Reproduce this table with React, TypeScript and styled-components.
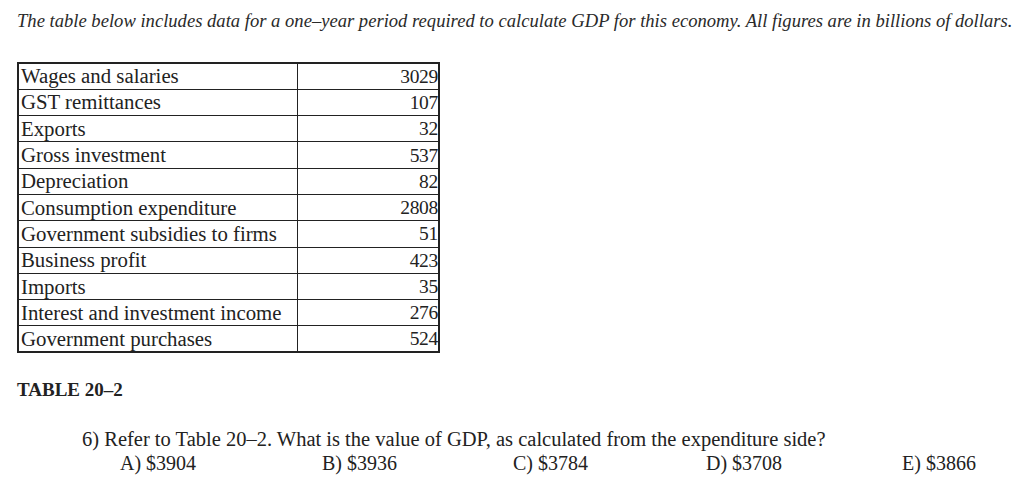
import React from "react";
import styled, { createGlobalStyle } from "styled-components";

const Global = createGlobalStyle`
  html, body { margin: 0; padding: 0; background: #fff; }
  body { font-family: "Liberation Serif", "DejaVu Serif", serif; color: #1e1e1e; }
`;

const Page = styled.div`
  width: 1024px;
  height: 484px;
  box-sizing: border-box;
  padding: 10px 0 0 17px;
  display: flex;
  flex-direction: column;
`;

const Intro = styled.p`
  margin: 0;
  font-style: italic;
  font-size: 18.6px;
  line-height: 22px;
  color: #2a2a2a;
  white-space: nowrap;
`;

const Table = styled.table`
  margin-top: 30px;
  border-collapse: collapse;
  width: 423px;
  border: 2px solid #222;
`;

const Row = styled.tr`
  height: 26.3px;
`;

const Label = styled.td`
  border: 1.6px solid #222;
  width: 276px;
  padding: 0 0 0 2px;
  font-size: 20.8px;
  line-height: 20px;
  white-space: nowrap;
  color: #222;
`;

const Value = styled.td`
  border: 1.6px solid #222;
  padding: 0;
  text-align: right;
  font-size: 19.5px;
  line-height: 19px;
  letter-spacing: -0.3px;
  color: #222;
`;

const Caption = styled.div`
  margin-top: 26px;
  font-weight: bold;
  font-size: 19px;
  line-height: 22px;
  color: #222;
`;

const Question = styled.div`
  margin: 26px 0 0 65px;
  font-size: 20.5px;
  line-height: 24px;
  color: #222;
  white-space: nowrap;
`;

const Answers = styled.div`
  display: grid;
  grid-template-columns: 202px 191px 193px 196px auto;
  margin-left: 103px;
  font-size: 20px;
  line-height: 24px;
  color: #222;
`;

const rows: [string, number][] = [
  ["Wages and salaries", 3029],
  ["GST remittances", 107],
  ["Exports", 32],
  ["Gross investment", 537],
  ["Depreciation", 82],
  ["Consumption expenditure", 2808],
  ["Government subsidies to firms", 51],
  ["Business profit", 423],
  ["Imports", 35],
  ["Interest and investment income", 276],
  ["Government purchases", 524],
];

const answers = ["A) $3904", "B) $3936", "C) $3784", "D) $3708", "E) $3866"];

export default function App() {
  return (
    <>
      <Global />
      <Page>
        <Intro>
          The table below includes data for a one–year period required to calculate GDP for this economy. All figures are in billions of dollars.
        </Intro>
        <Table>
          <tbody>
            {rows.map(([l, v]) => (
              <Row key={l}>
                <Label>{l}</Label>
                <Value>{v}</Value>
              </Row>
            ))}
          </tbody>
        </Table>
        <Caption>TABLE 20–2</Caption>
        <Question>
          6) Refer to Table 20–2. What is the value of GDP, as calculated from the expenditure side?
        </Question>
        <Answers>
          {answers.map((a) => (
            <span key={a}>{a}</span>
          ))}
        </Answers>
      </Page>
    </>
  );
}
